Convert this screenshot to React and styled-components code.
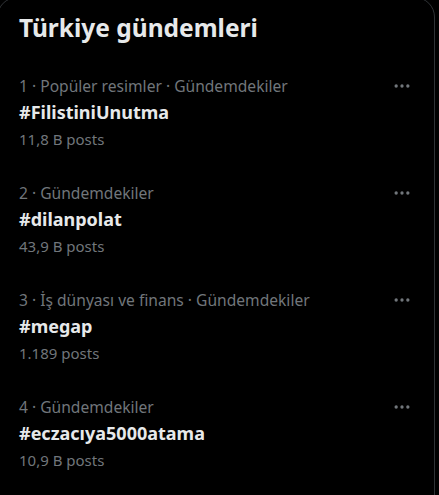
import styled, { createGlobalStyle } from "styled-components"

const GlobalStyle = createGlobalStyle`
    html, body {
        margin: 0;
        padding: 0;
        background: #000;
        overflow: hidden;
    }
    body {
        font-family: "Noto Sans", "Open Sans", sans-serif;
    }
`

const Card = styled.section`
    box-sizing: border-box;
    width: 438px;
    height: 520px;
    margin: -3px 0 0 -3px;
    border: 1px solid #2f3336;
    border-radius: 20px;
    background: #000;
    color: #e7e9ea;
`

const Title = styled.h2`
    margin: 0;
    padding: 14px 0 16px 21px;
    font-size: 24.5px;
    line-height: 32px;
    font-weight: 700;
    color: #e7e9ea;
`

const Row = styled.div`
    display: flex;
    flex-direction: row;
    align-items: flex-start;
    justify-content: space-between;
    padding: 13px 22px 14px 21px;
`

const Info = styled.div`
    display: flex;
    flex-direction: column;

    > .meta,
    > .count {
        font-size: 15px;
        line-height: 26px;
        color: #71767b;
    }

    > .meta {
        font-size: 15.6px;
    }

    > .tag {
        font-size: 18px;
        line-height: 27px;
        font-weight: 700;
        color: #e7e9ea;
    }

    > .count {
        line-height: 27px;
    }
`

const More = styled.div`
    display: flex;
    align-items: center;
    height: 26px;

    svg {
        width: 20px;
        fill: #71767b;
    }
`

const trends = [
    { meta: "1 · Popüler resimler · Gündemdekiler", tag: "#FilistiniUnutma", count: "11,8 B posts" },
    { meta: "2 · Gündemdekiler", tag: "#dilanpolat", count: "43,9 B posts" },
    { meta: "3 · İş dünyası ve finans · Gündemdekiler", tag: "#megap", count: "1.189 posts" },
    { meta: "4 · Gündemdekiler", tag: "#eczacıya5000atama", count: "10,9 B posts" },
]

const App = () => {
    return (
        <>
            <GlobalStyle />
            <Card>
                <Title>Türkiye gündemleri</Title>
                {trends.map((t) => (
                    <Row key={t.tag}>
                        <Info>
                            <span className="meta">{t.meta}</span>
                            <span className="tag">{t.tag}</span>
                            <span className="count">{t.count}</span>
                        </Info>
                        <More>
                            <svg viewBox="0 0 24 24" aria-hidden="true"><g><circle cx="5" cy="12" r="2"/><circle cx="12" cy="12" r="2"/><circle cx="19" cy="12" r="2"/></g></svg>
                        </More>
                    </Row>
                ))}
            </Card>
        </>
    )
}

export default App
